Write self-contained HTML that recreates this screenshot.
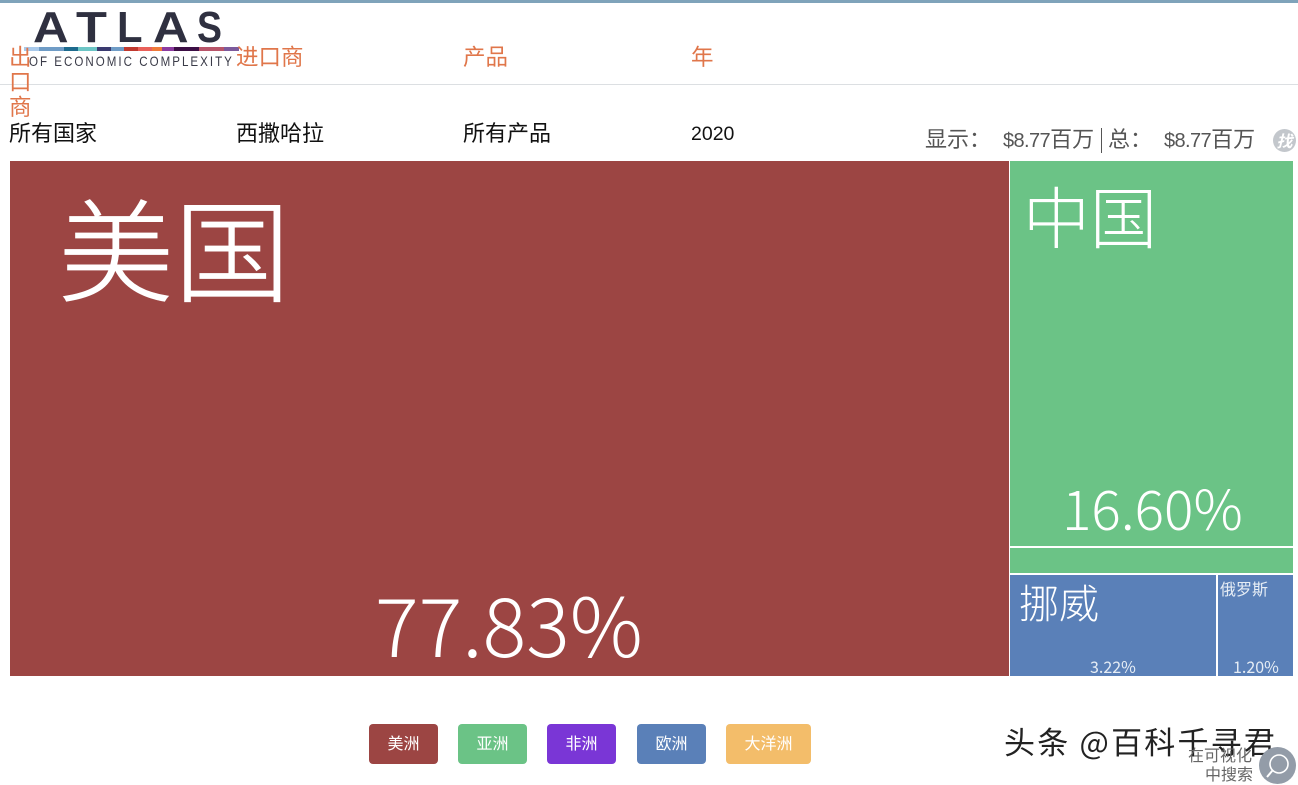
<!DOCTYPE html>
<html><head><meta charset="utf-8">
<style>
html,body{margin:0;padding:0;background:#fff}
body{width:1298px;height:783px;overflow:hidden;position:relative;font-family:"Noto Sans CJK SC","Liberation Sans",sans-serif}
.a{position:absolute;white-space:nowrap;line-height:1}
.h{color:#e0764a;font-size:22.5px}
.v{color:#111;font-size:22px}
.s{color:#555;font-size:22px}
.s i{font:20px/1 "Liberation Sans",sans-serif;letter-spacing:-.6px}
.r{position:absolute}
.w{color:#fff;font-weight:300}
.l{position:absolute;top:6px;font:bold 44px/1 "Liberation Sans",sans-serif;color:#2f3040;transform-origin:0 0}
.b{position:absolute;top:724px;height:40px;border-radius:4px;color:#fff;font-size:16px;line-height:37px;text-align:center}
</style></head><body>
<div class="r" style="left:0;top:0;width:1298px;height:3px;background:#7fa3ba"></div>
<div class="r" style="left:0;top:84px;width:1298px;height:1px;background:#dcdfe2"></div>

<div class="l" style="left:33px;transform:scaleX(1.12)">A</div>
<div class="l" style="left:76px;transform:scaleX(1.15)">T</div>
<div class="l" style="left:117px;transform:scaleX(.95)">L</div>
<div class="l" style="left:153px;transform:scaleX(1.12)">A</div>
<div class="l" style="left:197px;transform:scaleX(.85)">S</div>
<svg class="r" style="left:24px;top:47px" width="215" height="5">
<rect x="0" width="15" height="4" fill="#a9c9ea"/><rect x="15" width="25" height="4" fill="#6f9cc6"/><rect x="40" width="14" height="4" fill="#1d6a8d"/><rect x="54" width="19" height="4" fill="#6cc5c5"/><rect x="73" width="14" height="4" fill="#3a3a70"/><rect x="87" width="13" height="4" fill="#6f9cc6"/><rect x="100" width="14" height="4" fill="#c0392f"/><rect x="114" width="14" height="4" fill="#e9605a"/><rect x="128" width="10" height="4" fill="#ee7a3a"/><rect x="138" width="12" height="4" fill="#8c3aa0"/><rect x="150" width="25" height="4" fill="#3c0e45"/><rect x="175" width="25" height="4" fill="#b8556a"/><rect x="200" width="15" height="4" fill="#7c5a9c"/>
</svg>
<div class="a" style="left:29px;top:54px;font:14px/1 'Liberation Sans',sans-serif;color:#3a3b48;letter-spacing:2.45px;transform:scaleX(.825);transform-origin:0 0">OF ECONOMIC COMPLEXITY</div>

<div class="a h" style="left:9px;top:44px;line-height:25px;white-space:normal;width:22px">出口商</div>
<div class="a h" style="left:236px;top:45px">进口商</div>
<div class="a h" style="left:463px;top:45px">产品</div>
<div class="a h" style="left:691px;top:45px">年</div>

<div class="a v" style="left:9px;top:121px">所有国家</div>
<div class="a v" style="left:236px;top:121px">西撒哈拉</div>
<div class="a v" style="left:463px;top:121px">所有产品</div>
<div class="a v" style="left:691px;top:125px;font:19.5px/1 'Liberation Sans',sans-serif">2020</div>

<div class="a s" style="left:925px;top:127px">显示：</div>
<div class="a s" style="left:1003px;top:127px"><i style="font-style:normal">$8.77</i>百万</div>
<div class="r" style="left:1101px;top:128px;width:1px;height:25px;background:#555"></div>
<div class="a s" style="left:1108px;top:127px">总：</div>
<div class="a s" style="left:1164px;top:127px"><i style="font-style:normal">$8.77</i>百万</div>
<div class="r" style="left:1273px;top:129px;width:25px;height:23px;overflow:hidden"><div class="r" style="left:0;top:0;width:23px;height:23px;border-radius:50%;background:#c3c7cc;color:#fff;font-size:16px;line-height:23px;text-align:center;font-style:italic;font-weight:bold">找</div></div>

<div class="r" style="left:10px;top:161px;width:999px;height:515px;background:#9c4543"></div>
<div class="r" style="left:1010px;top:161px;width:283px;height:385px;background:#6bc386"></div>
<div class="r" style="left:1010px;top:548px;width:283px;height:25px;background:#6bc386"></div>
<div class="r" style="left:1010px;top:575px;width:206px;height:101px;background:#5a80b8"></div>
<div class="r" style="left:1218px;top:575px;width:75px;height:101px;background:#5a80b8"></div>

<div class="a w" style="left:58px;top:190px;font-size:115px;-webkit-text-stroke:.9px #fff;transform:scale(1.01,.97);transform-origin:0 0">美国</div>
<div class="a w" style="left:375px;top:582px;font-size:81.5px">77.83%</div>
<div class="a w" style="left:1023px;top:181px;font-size:67px">中国</div>
<div class="a w" style="left:1062px;top:479px;font-size:55px">16.60%</div>
<div class="a w" style="left:1019px;top:581px;font-size:40px">挪威</div>
<div class="a" style="left:1090px;top:658px;font-size:16px;color:#e6edf5">3.22%</div>
<div class="a" style="left:1220px;top:580px;font-size:16px;color:#e6edf5">俄罗斯</div>
<div class="a" style="left:1233px;top:658px;font-size:16px;color:#e6edf5">1.20%</div>

<div class="b" style="left:369px;width:69px;background:#9c4543">美洲</div>
<div class="b" style="left:458px;width:69px;background:#6bc386">亚洲</div>
<div class="b" style="left:547px;width:69px;background:#7a36d6">非洲</div>
<div class="b" style="left:637px;width:69px;background:#5a80b8">欧洲</div>
<div class="b" style="left:726px;width:85px;background:#f3bd6a">大洋洲</div>

<div class="a" style="left:1004px;top:725px;font-size:31px;color:#222;letter-spacing:2.2px">头条 @百科千寻君</div>
<div class="a" style="left:1188px;top:746px;font-size:16px;color:#666">在可视化</div>
<div class="a" style="left:1205px;top:765px;font-size:16px;color:#666">中搜索</div>
<div class="r" style="left:1259px;top:747px;width:37px;height:37px;border-radius:50%;background:#939ca8"></div>
<svg class="r" style="left:1259px;top:747px" width="37" height="36"><circle cx="20" cy="17" r="9" fill="none" stroke="#fff" stroke-width="1.6"/><path d="M13.5 23.5L8 30" stroke="#fff" stroke-width="2"/></svg>
</body></html>
